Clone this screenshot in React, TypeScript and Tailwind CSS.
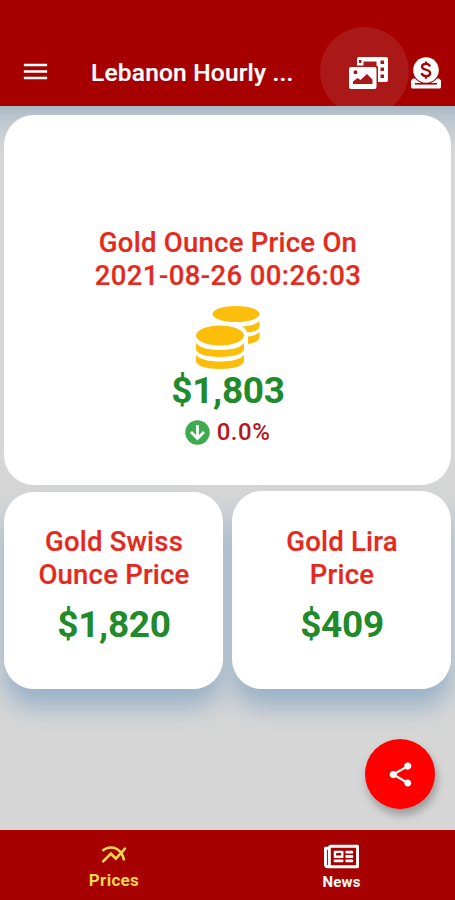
import React from "react";
import { MdMenu, MdShare, MdMultilineChart } from "react-icons/md";
import { FaRegNewspaper } from "react-icons/fa";

function GalleryIcon() {
  return (
    <svg width="40" height="32" viewBox="0 0 40 32" className="block">
      <path fill="#fff" fillRule="evenodd" d="M10 0h27a2 2 0 0 1 2 2v21a2 2 0 0 1-2 2h-8V10.500a2 2 0 0 0-1.500-2V4.500H14.500v4H8V2a2 2 0 0 1 2-2zM10 3v3h2.500V3zM31.500 3.500v3.500H35v-3.500zM31.500 10.500v3.500H35v-3.500zM31.500 17.500v3.500H35v-3.500z" />
      <path fill="#fff" fillRule="evenodd" d="M2 10h23.500a2 2 0 0 1 2 2v18a2 2 0 0 1-2 2H2a2 2 0 0 1-2-2V12a2 2 0 0 1 2-2zM6.500 13.300a2 2 0 1 0 0 4a2 2 0 1 0 0-4zM4 27h19.500v-4.500L18 17l-6.500 6-3-2L4 24.500z" />
    </svg>
  );
}

function DonateIcon() {
  return (
    <svg width="32" height="32" viewBox="0 0 32 32" className="block">
      <path fill="#fff" d="M3 21.500h26l2 2V30a1.500 1.500 0 0 1-1.500 1.500h-27A1.500 1.500 0 0 1 1 30v-6.500z" />
      <path stroke="#a70000" strokeWidth="1.600" d="M5 26.800h22" />
      <circle cx="16" cy="13" r="13.800" fill="#a70000" />
      <circle cx="16" cy="13" r="12.800" fill="#fff" />
      <path fill="none" stroke="#a70000" strokeWidth="2.300" d="M20 9.500c-.5-2-2-2.700-4-2.700-2.400 0-4 1-4 2.900 0 4.100 8.200 2 8.200 6.300 0 2-1.700 3.100-4.200 3.100-2.400 0-4-1-4.300-3.100M16 4.500v2.500M16 19v2.700" />
    </svg>
  );
}

function CoinsIcon() {
  return (
    <svg width="64" height="64" viewBox="0 0 64 64" className="block" fill="#fdbd0b">
      <ellipse cx="40" cy="8" rx="23.500" ry="8" />
      <path d="M46 20.500c7-.5 14-2 17.500-5.500v5c0 4-5 6-12 6.500-1-2.500-3-4.500-5.500-6z" />
      <path d="M52 30.500c5-.5 9-2 11.500-4.500v5c0 4-5 6-11.500 7z" />
      <ellipse cx="24" cy="29.500" rx="24" ry="10" />
      <path d="M0 37c4 5 13 7 24 7S44 42 48 37v6c0 5-11 8-24 8S0 48 0 43z" />
      <path d="M0 49c4 4.500 13 6.500 24 6.500s20-2 24-6.500v6c0 5-11 8-24 8s-24-3-24-8z" />
    </svg>
  );
}

function DownIcon() {
  return (
    <svg width="25" height="25" viewBox="0 0 25 25" className="block">
      <circle cx="12.500" cy="12.500" r="12.200" fill="#3dab4e" />
      <path d="M12.500 5v13M6 12l6.500 6.500L19 12" fill="none" stroke="#fff" strokeWidth="2.800" />
    </svg>
  );
}

function PriceCard({ lines, price, className }: { lines: string[]; price: string; className: string }) {
  return (
    <section className={`relative flex flex-col items-center rounded-[30px] bg-white ${className}`}>
      <div className="absolute inset-0 -z-10 rounded-[30px] shadow-[0_18px_24px_#9ab2c8]" />
      <h2 className="ml-px text-center text-[27.5px] leading-[33px] font-medium tracking-[0.2px] text-[#e52a1d] [-webkit-text-stroke:0.2px_#e52a1d]">
        {lines.map((line) => (
          <span key={line} className="block whitespace-nowrap">{line}</span>
        ))}
      </h2>
      <p className="mt-[12px] ml-px text-[37px] leading-[44px] font-bold tracking-[-0.3px] text-[#218a2b]">{price}</p>
    </section>
  );
}

export default function App() {
  return (
    <div className="flex h-[900px] w-[455px] flex-col overflow-hidden bg-[#d6d6d6] font-['Roboto',sans-serif]">
      <header className="relative flex h-[106px] shrink-0 overflow-hidden bg-[#a70000] text-white">
        <div className="absolute top-[27px] left-[320px] size-[89px] rounded-full bg-[#aa1818]" />
        <button className="mt-[56px] ml-[20px] size-[31px]"><MdMenu size={31} /></button>
        <h1 className="mt-[58px] ml-[40px] w-[220px] text-[24.5px] leading-[30px] font-medium tracking-[0.2px] whitespace-nowrap [-webkit-text-stroke:0.2px_white]">Lebanon Hourly ...</h1>
        <div className="absolute top-[57px] left-[349px] flex gap-[21px]">
          <GalleryIcon />
          <DonateIcon />
        </div>
      </header>
      <main className="relative isolate h-[724px] shrink-0 overflow-hidden bg-[linear-gradient(#a9b8c3,#bcc6ce_12px,#d6d6d6_44px)] px-[4px] pt-[9px]">
        <section className="flex h-[370px] flex-col items-center rounded-[30px] bg-white pt-[111px]">
          <h2 className="ml-px text-center text-[27.5px] leading-[33px] font-medium tracking-[0.25px] text-[#e52a1d] [-webkit-text-stroke:0.2px_#e52a1d]">
            <span className="block">Gold Ounce Price On</span>
            <span className="block tracking-[0.4px]">2021-08-26 00:26:03</span>
          </h2>
          <div className="mt-[14px]"><CoinsIcon /></div>
          <p className="mt-[-1px] ml-px text-[37px] leading-[44px] font-bold tracking-[-0.3px] text-[#218a2b]">$1,803</p>
          <div className="mt-[5px] flex items-center gap-[7px]">
            <DownIcon />
            <span className="text-[24px] leading-[28px] font-medium tracking-[0.5px] text-[#b7161b]">0.0%</span>
          </div>
        </section>
        <div className="mt-[6px] flex justify-between">
          <PriceCard lines={["Gold Swiss", "Ounce Price"]} price="$1,820" className="mt-px h-[197px] w-[219px] pt-[33px]" />
          <PriceCard lines={["Gold Lira", "Price"]} price="$409" className="h-[198px] w-[219px] pt-[34px]" />
        </div>
        <button className="absolute top-[633px] left-[365px] flex size-[70px] items-center justify-center rounded-full bg-[#ff0000] text-white shadow-[2px_6px_9px_#9b9b9b]">
          <MdShare size={29} />
        </button>
      </main>
      <nav className="flex h-[70px] shrink-0 bg-[#a70000] text-[15px] leading-[18px] font-bold text-white">
        <div className="flex w-[228px] flex-col items-center pt-[10px] text-[#f9d94b]">
          <MdMultilineChart size={30} />
          <span className="mt-px text-[17px] tracking-[0.3px]">Prices</span>
        </div>
        <div className="flex w-[227px] flex-col items-center pt-[9px]">
          <FaRegNewspaper size={35} />
          <span className="-mt-px tracking-[0.2px]">News</span>
        </div>
      </nav>
    </div>
  );
}
